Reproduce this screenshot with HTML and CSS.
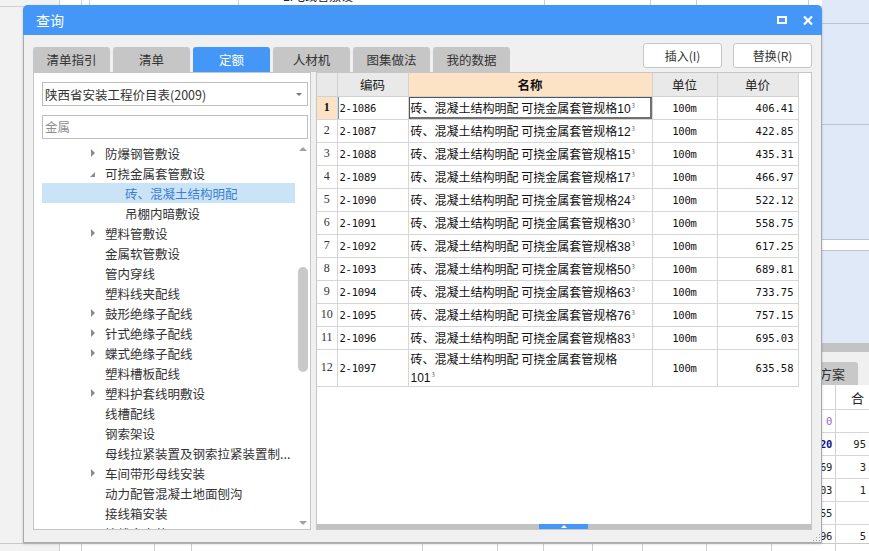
FILE: index.html
```html
<!DOCTYPE html>
<html lang="zh">
<head>
<meta charset="utf-8">
<title>查询</title>
<link rel="stylesheet" href="styles.css">
</head>
<body>
<div class="app">
  <div class="app-main">
    <div class="strip strip-top">
      <span class="cell"></span><span class="cell w22"></span><span class="cell w8"></span><span class="cell w149"></span><span class="cell w306 txt">1.电线管敷设</span><span class="cell w105"></span><span class="cell w47"></span><span class="cell w112"></span>
    </div>
  </div>
  <div class="app-side">
    <div class="side-a"></div>
    <div class="side-b"></div>
    <div class="side-c"></div>
    <div class="side-white"></div>
    <div class="side-d"></div>
    <div class="side-gray"></div>
    <div class="side-tabs"><div class="side-tab">方案</div></div>
    <div class="side-table">
      <div class="srow shead"><span class="sc1"></span><span class="sc2 head">合</span></div>
      <div class="srow"><span class="sc1 purple">0</span><span class="sc2"></span></div>
      <div class="srow"><span class="sc1 navy">1.20</span><span class="sc2">95</span></div>
      <div class="srow"><span class="sc1">8.69</span><span class="sc2">3</span></div>
      <div class="srow"><span class="sc1">5.03</span><span class="sc2">1</span></div>
      <div class="srow"><span class="sc1">0.55</span><span class="sc2"></span></div>
      <div class="srow"><span class="sc1">2.96</span><span class="sc2">5</span></div>
    </div>
  </div>
  <div class="strip strip-bottom">
    <span class="bcell b60 grey"></span><span class="bcell b22"></span><span class="bcell b73"></span><span class="bcell b37"></span><span class="bcell b231"></span><span class="bcell b75"></span><span class="bcell b46"></span><span class="bcell b49"></span><span class="bcell b50"></span><span class="bcell b64"></span><span class="bcell b65"></span><span class="bcell b64"></span><span class="bcell b33"></span>
  </div>
</div>

<div class="dialog">
  <div class="titlebar">
    <span class="title">查询</span>
    <span class="tb-max"></span>
    <svg class="tb-close" width="10" height="9" viewBox="0 0 10 9"><path d="M1 0.5 L9 8.5 M9 0.5 L1 8.5" stroke="#fff" stroke-width="2.2" fill="none"/></svg>
  </div>
  <div class="dbody">
    <div class="toolbar">
      <div class="tabs">
        <div class="tab">清单指引</div>
        <div class="tab">清单</div>
        <div class="tab active">定额</div>
        <div class="tab">人材机</div>
        <div class="tab">图集做法</div>
        <div class="tab">我的数据</div>
      </div>
      <div class="btns">
        <button class="btn">插入(I)</button>
        <button class="btn">替换(R)</button>
      </div>
    </div>
    <div class="main">
      <div class="leftpanel">
        <div class="select"><span>陕西省安装工程价目表(2009)</span><i class="sel-arrow"></i></div>
        <div class="search">金属</div>
        <div class="tree">
          <div class="tree-list">
            <div class="node l2"><i class="arr"></i>防爆钢管敷设</div>
            <div class="node l2"><i class="arr open"></i>可挠金属套管敷设</div>
            <div class="node l3 sel">砖、混凝土结构明配</div>
            <div class="node l3">吊棚内暗敷设</div>
            <div class="node l2"><i class="arr"></i>塑料管敷设</div>
            <div class="node l2"><i class="arr none"></i>金属软管敷设</div>
            <div class="node l2"><i class="arr none"></i>管内穿线</div>
            <div class="node l2"><i class="arr none"></i>塑料线夹配线</div>
            <div class="node l2"><i class="arr"></i>鼓形绝缘子配线</div>
            <div class="node l2"><i class="arr"></i>针式绝缘子配线</div>
            <div class="node l2"><i class="arr"></i>蝶式绝缘子配线</div>
            <div class="node l2"><i class="arr none"></i>塑料槽板配线</div>
            <div class="node l2"><i class="arr"></i>塑料护套线明敷设</div>
            <div class="node l2"><i class="arr none"></i>线槽配线</div>
            <div class="node l2"><i class="arr none"></i>钢索架设</div>
            <div class="node l2"><i class="arr none"></i>母线拉紧装置及钢索拉紧装置制...</div>
            <div class="node l2"><i class="arr"></i>车间带形母线安装</div>
            <div class="node l2"><i class="arr none"></i>动力配管混凝土地面刨沟</div>
            <div class="node l2"><i class="arr none"></i>接线箱安装</div>
            <div class="node l2"><i class="arr none"></i>接线盒安装</div>
          </div>
          <div class="vscroll">
            <i class="vs-up"></i>
            <div class="vs-thumb"></div>
            <i class="vs-down"></i>
          </div>
        </div>
      </div>
      <div class="rightpanel">
        <table class="grid">
          <colgroup><col class="c-no"><col class="c-code"><col class="c-name"><col class="c-unit"><col class="c-price"></colgroup>
          <thead>
            <tr><th class="h-no"></th><th>编码</th><th class="h-name">名称</th><th>单位</th><th>单价</th></tr>
          </thead>
          <tbody>
            <tr class="cur"><td class="no">1</td><td class="code">2-1086</td><td class="name focus">砖、混凝土结构明配 可挠金属套管规格<span class="n">10</span><sup>3</sup></td><td class="unit">100m</td><td class="price">406.41</td></tr>
            <tr><td class="no">2</td><td class="code">2-1087</td><td class="name">砖、混凝土结构明配 可挠金属套管规格<span class="n">12</span><sup>3</sup></td><td class="unit">100m</td><td class="price">422.85</td></tr>
            <tr><td class="no">3</td><td class="code">2-1088</td><td class="name">砖、混凝土结构明配 可挠金属套管规格<span class="n">15</span><sup>3</sup></td><td class="unit">100m</td><td class="price">435.31</td></tr>
            <tr><td class="no">4</td><td class="code">2-1089</td><td class="name">砖、混凝土结构明配 可挠金属套管规格<span class="n">17</span><sup>3</sup></td><td class="unit">100m</td><td class="price">466.97</td></tr>
            <tr><td class="no">5</td><td class="code">2-1090</td><td class="name">砖、混凝土结构明配 可挠金属套管规格<span class="n">24</span><sup>3</sup></td><td class="unit">100m</td><td class="price">522.12</td></tr>
            <tr><td class="no">6</td><td class="code">2-1091</td><td class="name">砖、混凝土结构明配 可挠金属套管规格<span class="n">30</span><sup>3</sup></td><td class="unit">100m</td><td class="price">558.75</td></tr>
            <tr><td class="no">7</td><td class="code">2-1092</td><td class="name">砖、混凝土结构明配 可挠金属套管规格<span class="n">38</span><sup>3</sup></td><td class="unit">100m</td><td class="price">617.25</td></tr>
            <tr><td class="no">8</td><td class="code">2-1093</td><td class="name">砖、混凝土结构明配 可挠金属套管规格<span class="n">50</span><sup>3</sup></td><td class="unit">100m</td><td class="price">689.81</td></tr>
            <tr><td class="no">9</td><td class="code">2-1094</td><td class="name">砖、混凝土结构明配 可挠金属套管规格<span class="n">63</span><sup>3</sup></td><td class="unit">100m</td><td class="price">733.75</td></tr>
            <tr><td class="no">10</td><td class="code">2-1095</td><td class="name">砖、混凝土结构明配 可挠金属套管规格<span class="n">76</span><sup>3</sup></td><td class="unit">100m</td><td class="price">757.15</td></tr>
            <tr><td class="no">11</td><td class="code">2-1096</td><td class="name">砖、混凝土结构明配 可挠金属套管规格<span class="n">83</span><sup>3</sup></td><td class="unit">100m</td><td class="price">695.03</td></tr>
            <tr class="tall"><td class="no">12</td><td class="code">2-1097</td><td class="name">砖、混凝土结构明配 可挠金属套管规格<br><span class="n">101</span><sup>3</sup></td><td class="unit">100m</td><td class="price">635.58</td></tr>
          </tbody>
        </table>
        <div class="hscroll"><div class="hs-handle"><i></i></div></div>
      </div>
    </div>
    <i class="grip"></i>
  </div>
</div>
</body>
</html>
```

FILE: styles.css
```css
* { box-sizing: border-box; margin: 0; padding: 0; }
html, body { width: 869px; height: 551px; overflow: hidden; }
body {
  position: relative;
  background: #fff;
  font-family: "Noto Sans CJK SC", "Microsoft YaHei", sans-serif;
  font-size: 12px;
  color: #333;
}

/* ---------- background application ---------- */
.app {
  display: grid;
  grid-template-columns: 822px 47px;
  grid-template-rows: 543px 8px;
  width: 869px;
  height: 551px;
}
.app-main { background: #f2f2f2; overflow: hidden; }
.strip-top {
  display: flex;
  height: 20px;
  margin-top: -13px;
  background: #fff;
  border-bottom: 1px solid #d0d0d0;
}
.strip-top .cell { width: 60px; border-right: 1px solid #cfcfcf; line-height: 20px; white-space: nowrap; }
.strip-top .cell:first-child { background: #f2f2f2; }
.strip-top .w22 { width: 22px; }
.strip-top .w8 { width: 8px; }
.strip-top .w149 { width: 149px; }
.strip-top .w306 { width: 306px; }
.strip-top .w105 { width: 106px; }
.strip-top .w47 { width: 46px; }
.strip-top .w112 { width: 112px; }
.strip-top .txt { padding-left: 44px; color: #222; font-family: "Liberation Sans", "Noto Sans CJK SC", sans-serif; }

.app-side { display: flex; flex-direction: column; background: #dfe9f8; overflow: hidden; }
.app-side > div { flex-shrink: 0; }
.side-a { height: 24px; border-bottom: 1px solid #b8c5d8; }
.side-b { height: 101px; border-bottom: 1px solid #b8c5d8; }
.side-c { height: 114px; }
.side-white { height: 12px; background: #fff; border-top: 1px solid #b8c5d8; border-bottom: 1px solid #b8c5d8; }
.side-d { height: 92px; }
.side-gray { height: 9px; background: #c3c3c3; }
.side-tabs { height: 33px; background: #f0f0f0; display: flex; align-items: flex-end; }
.side-tab {
  width: 36px; height: 23px; background: #c8c8c8; border-radius: 0 3px 0 0;
  font-size: 13px; color: #333; line-height: 23px; text-align: right; padding-right: 13px;
  white-space: nowrap; overflow: hidden; direction: rtl;
}
.app-side > .side-table { flex: 1 1 auto; background: #fff; }
.srow { display: flex; height: 23px; border-bottom: 1px solid #d6d6d6; }
.shead { height: 25px; }
.sc1 {
  width: 14px; border-right: 1px solid #d0d0d0; overflow: hidden; direction: rtl;
  text-align: right; padding-right: 3px; line-height: 22px; white-space: nowrap;
  font-family: "DejaVu Sans Mono", monospace; font-size: 10.5px; color: #222; letter-spacing: -0.3px;
}
.sc2 {
  flex: 1; text-align: right; padding-right: 3px; line-height: 22px;
  font-family: "DejaVu Sans Mono", monospace; font-size: 10.5px; color: #222;
}
.sc2.head { text-align: left; padding-left: 15px; font-family: "Noto Sans CJK SC", sans-serif; font-size: 13px; line-height: 25px; }
.purple { color: #9a62c4; }
.navy { color: #14148a; font-weight: bold; }

.strip-bottom {
  grid-column: 1 / 3;
  display: flex;
  background: #fff;
  border-top: 1px solid #c9c9c9;
}
.bcell { border-right: 1px solid #cfcfcf; }
.b60 { width: 60px; } .grey { background: #f2f2f2; }
.b22 { width: 22px; } .b73 { width: 73px; } .b37 { width: 37px; } .b231 { width: 231px; }
.b75 { width: 75px; } .b46 { width: 46px; } .b49 { width: 49px; } .b50 { width: 50px; }
.b64 { width: 64px; } .b65 { width: 65px; } .b33 { width: 33px; border-right: 0; }

/* ---------- dialog ---------- */
.dialog {
  position: absolute;
  left: 23px;
  top: 5px;
  width: 799px;
  height: 538px;
  background: #f0f0f0;
  border: 1px solid #a9a9a9;
  border-top: 0;
  border-radius: 5px 5px 0 0;
  display: flex;
  flex-direction: column;
  box-shadow: 0 1px 3px rgba(0,0,0,0.18);
}
.titlebar {
  flex: 0 0 30px;
  height: 30px;
  margin: 0 -1px;
  background: #4497f6;
  border-radius: 5px 5px 0 0;
  display: flex;
  align-items: center;
  padding: 0 9px 0 13px;
  color: #fff;
}
.title { font-size: 14px; flex: 1; }
.tb-max { width: 10px; height: 8px; border: 2px solid #fff; margin-right: 16px; }
.tb-close { display: block; }

.dbody {
  flex: 1 1 0;
  min-height: 0;
  display: flex;
  flex-direction: column;
  padding: 8px 9px 12px 9px;
  position: relative;
}
.toolbar { flex: 0 0 29px; height: 29px; display: flex; }
.tabs { display: flex; gap: 3px; align-self: flex-end; }
.tab {
  width: 77px; height: 25px; background: #c6c6c6; border-radius: 3px 3px 0 0;
  text-align: center; line-height: 25px; font-size: 12.5px; color: #333;
}
.tab.active { background: #4497f6; color: #fff; }
.btns { margin-left: auto; display: flex; gap: 11px; align-self: flex-start; }
.btn {
  width: 79px; height: 25px; background: #fff; border: 1px solid #c6c6c6; border-radius: 3px;
  font-family: "Noto Sans CJK SC", sans-serif; font-size: 12px; color: #333;
}

.main { flex: 1 1 0; min-height: 0; display: flex; gap: 5px; }
.leftpanel {
  width: 278px; background: #fff; border: 1px solid #c6c6c6;
  padding: 9px 2px 0 8px;
  display: flex; flex-direction: column;
  min-height: 0; overflow: hidden;
}
.select {
  flex: 0 0 24px;
  height: 24px; border: 1px solid #bdbdbd; display: flex; align-items: center;
  padding-left: 2px; color: #333; font-size: 12.5px;
}
.select span { flex: 1; }
.sel-arrow { width: 0; height: 0; border-left: 3px solid transparent; border-right: 3px solid transparent; border-top: 3px solid #777; margin-right: 5px; }
.search {
  flex: 0 0 24px;
  margin-top: 9px; height: 24px; border: 1px solid #bdbdbd; padding-left: 2px;
  line-height: 22px; color: #8f8f8f; font-size: 12.5px;
}
.tree { margin-top: 3px; flex: 1 1 0; display: flex; min-height: 0; }
.tree-list { width: 253px; padding-top: 1px; overflow: hidden; }
.node { height: 20px; display: flex; align-items: center; font-size: 12.5px; color: #333; white-space: nowrap; }
.node.l2 { padding-left: 47px; }
.node.l3 { padding-left: 83px; }
.node.sel { background: #cbe3f7; color: #3b7fd1; }
.arr {
  width: 16px; height: 20px; display: flex; align-items: center;
}
.arr::before {
  content: ""; width: 0; height: 0;
  border-left: 4px solid #8a8a8a; border-top: 4px solid transparent; border-bottom: 4px solid transparent;
  margin-left: 2px;
}
.arr.open::before { border: 0; border-right: 5px solid #8a8a8a; border-top: 5px solid transparent; margin-left: 1px; margin-top: 2px; }
.arr.none::before { border: 0; }

.vscroll { width: 11px; margin-left: 2px; display: flex; flex-direction: column; align-items: center; padding-top: 5px; padding-bottom: 4px; }
.vs-up { flex: none; width: 0; height: 0; border-left: 4px solid transparent; border-right: 4px solid transparent; border-bottom: 4px solid #a0a0a0; }
.vs-thumb { flex: none; width: 10px; height: 105px; background: #c9c9c9; border-radius: 5px; margin-top: 116px; }
.vs-down { flex: none; width: 0; height: 0; border-left: 4px solid transparent; border-right: 4px solid transparent; border-top: 4px solid #a0a0a0; margin-top: auto; }

.rightpanel {
  flex: 1; background: #fff; border: 1px solid #c6c6c6;
  display: flex; flex-direction: column; min-height: 0;
}
.grid {
  width: 481px; border-collapse: collapse; table-layout: fixed;
  font-size: 12px; color: #111;
}
.c-no { width: 20px; } .c-code { width: 71px; } .c-name { width: 244px; } .c-unit { width: 65px; } .c-price { width: 81px; }
.grid th {
  height: 23px; background: #e9e9e9; border: 1px solid #d2d2d2; border-top: 0;
  font-weight: normal; font-size: 12.5px; color: #222;
}
.grid th:first-child { border-left: 0; }
.grid th.h-name { background: #fde3c6; font-weight: bold; color: #111; }
.grid td {
  height: 23px; border: 1px solid #d6d6d6; padding: 0 2px; white-space: nowrap; overflow: hidden;
}
.grid td:first-child { border-left: 0; }
.grid tr.tall td { height: 35px; }
.grid tr.tall td.name { line-height: 16px; white-space: normal; padding-top: 1px; }
.no { text-align: center; font-family: "Liberation Serif", serif; font-size: 12px; color: #333; padding: 0 !important; }
.cur .no { background: #fde3c6; font-weight: bold; color: #111; }
.code { font-family: "DejaVu Sans Mono", monospace; font-size: 10.5px; letter-spacing: -0.2px; color: #111; }
.cur .code { box-shadow: inset 1px 0 0 #5a9be6; }
.name { font-size: 12px; color: #111; }
.name .n { font-family: "Liberation Sans", sans-serif; font-size: 12px; }
.name sup { font-size: 6px; color: #555; vertical-align: 5px; margin-left: 1px; }
.focus { box-shadow: inset 1px 1px 0 #555, inset -2px -2px 0 #707070; }
.unit { text-align: center; font-family: "DejaVu Sans Mono", monospace; font-size: 10.5px; letter-spacing: -0.2px; }
.price { text-align: right; font-family: "DejaVu Sans Mono", monospace; font-size: 10.5px; padding-right: 4px !important; }

.hscroll { flex: none; margin-top: auto; height: 5px; background: #c2c2c2; display: flex; padding-left: 222px; }
.hs-handle { width: 49px; height: 5px; background: #4497f6; display: flex; justify-content: center; align-items: center; }
.hs-handle i { width: 0; height: 0; border-left: 3px solid transparent; border-right: 3px solid transparent; border-bottom: 3px solid #fff; }

.grip {
  position: absolute; right: 1px; bottom: 1px; width: 8px; height: 8px;
  background: radial-gradient(circle, #9a9a9a 0.8px, transparent 1px) 0 0 / 3px 3px;
  clip-path: polygon(100% 0, 100% 100%, 0 100%);
}
```
